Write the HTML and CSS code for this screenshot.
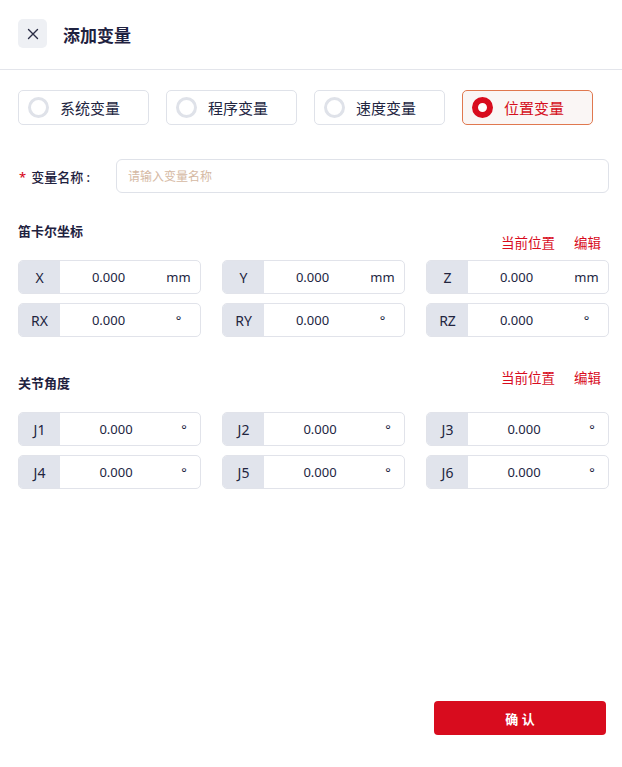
FILE: index.html
```html
<!DOCTYPE html>
<html lang="zh-CN">
<head>
    <meta charset="UTF-8">
    <meta name="viewport" content="width=device-width, initial-scale=1.0">
    <title>添加变量</title>
    <link rel="stylesheet" href="styles.css">
</head>
<body>
<div class="page">
    <div class="header">
        <span class="close-btn">
            <svg width="12" height="12" viewBox="0 0 12 12"><path d="M1.5 1.5 L10.5 10.5 M10.5 1.5 L1.5 10.5" stroke="#2a2d45" stroke-width="1.4" stroke-linecap="round"/></svg>
        </span>
        <h1>添加变量</h1>
    </div>

    <div class="content">
        <div class="type-group">
            <label class="type-item"><span class="radio"></span>系统变量</label>
            <label class="type-item"><span class="radio"></span>程序变量</label>
            <label class="type-item"><span class="radio"></span>速度变量</label>
            <label class="type-item active"><span class="radio"></span>位置变量</label>
        </div>

        <div class="name-row">
            <label class="name-label"><span class="required">*</span>变量名称 :</label>
            <input type="text" class="name-input" placeholder="请输入变量名称">
        </div>

        <div class="section-head cart-head">
            <span class="section-title">笛卡尔坐标</span>
            <span class="links"><a>当前位置</a><a>编辑</a></span>
        </div>
        <div class="coord-grid">
            <div class="cell"><span class="cell-label">X</span><span class="cell-value">0.000</span><span class="cell-unit">mm</span></div>
            <div class="cell"><span class="cell-label">Y</span><span class="cell-value">0.000</span><span class="cell-unit">mm</span></div>
            <div class="cell"><span class="cell-label">Z</span><span class="cell-value">0.000</span><span class="cell-unit">mm</span></div>
            <div class="cell"><span class="cell-label">RX</span><span class="cell-value">0.000</span><span class="cell-unit">°</span></div>
            <div class="cell"><span class="cell-label">RY</span><span class="cell-value">0.000</span><span class="cell-unit">°</span></div>
            <div class="cell"><span class="cell-label">RZ</span><span class="cell-value">0.000</span><span class="cell-unit">°</span></div>
        </div>

        <div class="section-head joint-head">
            <span class="section-title">关节角度</span>
            <span class="links"><a>当前位置</a><a>编辑</a></span>
        </div>
        <div class="coord-grid joint-grid">
            <div class="cell"><span class="cell-label">J1</span><span class="cell-value">0.000</span><span class="cell-unit">°</span></div>
            <div class="cell"><span class="cell-label">J2</span><span class="cell-value">0.000</span><span class="cell-unit">°</span></div>
            <div class="cell"><span class="cell-label">J3</span><span class="cell-value">0.000</span><span class="cell-unit">°</span></div>
            <div class="cell"><span class="cell-label">J4</span><span class="cell-value">0.000</span><span class="cell-unit">°</span></div>
            <div class="cell"><span class="cell-label">J5</span><span class="cell-value">0.000</span><span class="cell-unit">°</span></div>
            <div class="cell"><span class="cell-label">J6</span><span class="cell-value">0.000</span><span class="cell-unit">°</span></div>
        </div>
    </div>

    <div class="footer">
        <button class="confirm">确 认</button>
    </div>
</div>
</body>
</html>
```

FILE: styles.css
```css
* {
    box-sizing: border-box;
}

body {
    margin: 0;
    font-family: "Noto Sans", "Noto Sans CJK SC", sans-serif;
    color: #22253f;
    background: #fff;
}

.page {
    display: flex;
    flex-direction: column;
    min-height: 100vh;
}

.header {
    height: 70px;
    display: flex;
    align-items: center;
    padding: 0 18px 2px;
    border-bottom: 1px solid #e3e5eb;
}

.close-btn {
    width: 29px;
    height: 29px;
    border-radius: 5px;
    background: #eef0f4;
    display: flex;
    align-items: center;
    justify-content: center;
}

.header h1 {
    margin: 0 0 0 16px;
    font-size: 17px;
    font-weight: 700;
    color: #1f2240;
    line-height: 1;
    padding-top: 3px;
}

.content {
    padding: 20px 13px 0 18px;
}

.type-group {
    display: flex;
    gap: 17px;
}

.type-item {
    width: 131px;
    height: 35px;
    border: 1px solid #dfe2e9;
    border-radius: 5px;
    display: flex;
    align-items: center;
    padding-left: 9px;
    font-size: 15px;
    color: #22253f;
}

.radio {
    width: 21px;
    height: 21px;
    border-radius: 50%;
    border: 3px solid #dfe2e9;
    margin-right: 11px;
}

.type-item.active {
    border-color: #e0784f;
    background: #faf6f5;
    color: #d50f20;
}

.type-item.active .radio {
    border: 6px solid #d80c1e;
    background: #fff;
}

.name-row {
    display: flex;
    align-items: center;
    margin-top: 34px;
}

.name-label {
    width: 98px;
    font-size: 13px;
    font-weight: 500;
    color: #1f2240;
    padding-left: 1px;
}

.required {
    color: #d80c1e;
    margin-right: 5px;
}

.name-input {
    flex: 1;
    height: 34px;
    border: 1px solid #dfe2e9;
    border-radius: 6px;
    padding: 0 11px;
    font-family: inherit;
    font-size: 12px;
    outline: none;
}

.name-input::placeholder {
    color: #d5b9a3;
}

.section-head {
    display: flex;
    justify-content: space-between;
    padding-right: 8px;
}

.cart-head {
    margin-top: 29px;
    height: 30px;
    align-items: flex-end;
}

.cart-head .section-title {
    align-self: flex-start;
}

.joint-head {
    margin-top: 32px;
    height: 23px;
    align-items: flex-start;
}

.joint-head .section-title {
    align-self: flex-end;
}

.section-title {
    font-size: 13px;
    font-weight: 700;
    line-height: 18px;
    color: #1f2240;
}

.links {
    display: flex;
    gap: 19px;
    line-height: 18px;
}

.links a {
    font-size: 13.5px;
    color: #d80c1e;
    cursor: pointer;
}

.coord-grid {
    display: grid;
    grid-template-columns: 1fr 1fr 1fr;
    column-gap: 21px;
    row-gap: 9px;
    margin-top: 8px;
}

.joint-grid {
    margin-top: 20px;
}

.cell {
    height: 34px;
    display: flex;
    border: 1px solid #e1e3ea;
    border-radius: 5px;
    overflow: hidden;
    font-size: 13px;
}

.cell-label {
    width: 41px;
    background: #e1e4ec;
    display: flex;
    align-items: center;
    justify-content: center;
    font-size: 14px;
    color: #22253f;
}

.cell-value {
    flex: 1;
    display: flex;
    align-items: center;
    justify-content: center;
    color: #22253f;
}

.cell-unit {
    width: 43px;
    display: flex;
    align-items: center;
    justify-content: center;
    color: #22253f;
}

.joint-grid .cell-unit {
    width: 28px;
    padding-right: 4px;
}

.footer {
    margin-top: auto;
    display: flex;
    justify-content: flex-end;
    padding: 0 16px 32px;
}

.confirm {
    width: 172px;
    height: 34px;
    border: none;
    border-radius: 4px;
    background: #d80c1e;
    color: #fff;
    font-family: inherit;
    font-size: 13px;
    font-weight: 700;
    cursor: pointer;
}
```
